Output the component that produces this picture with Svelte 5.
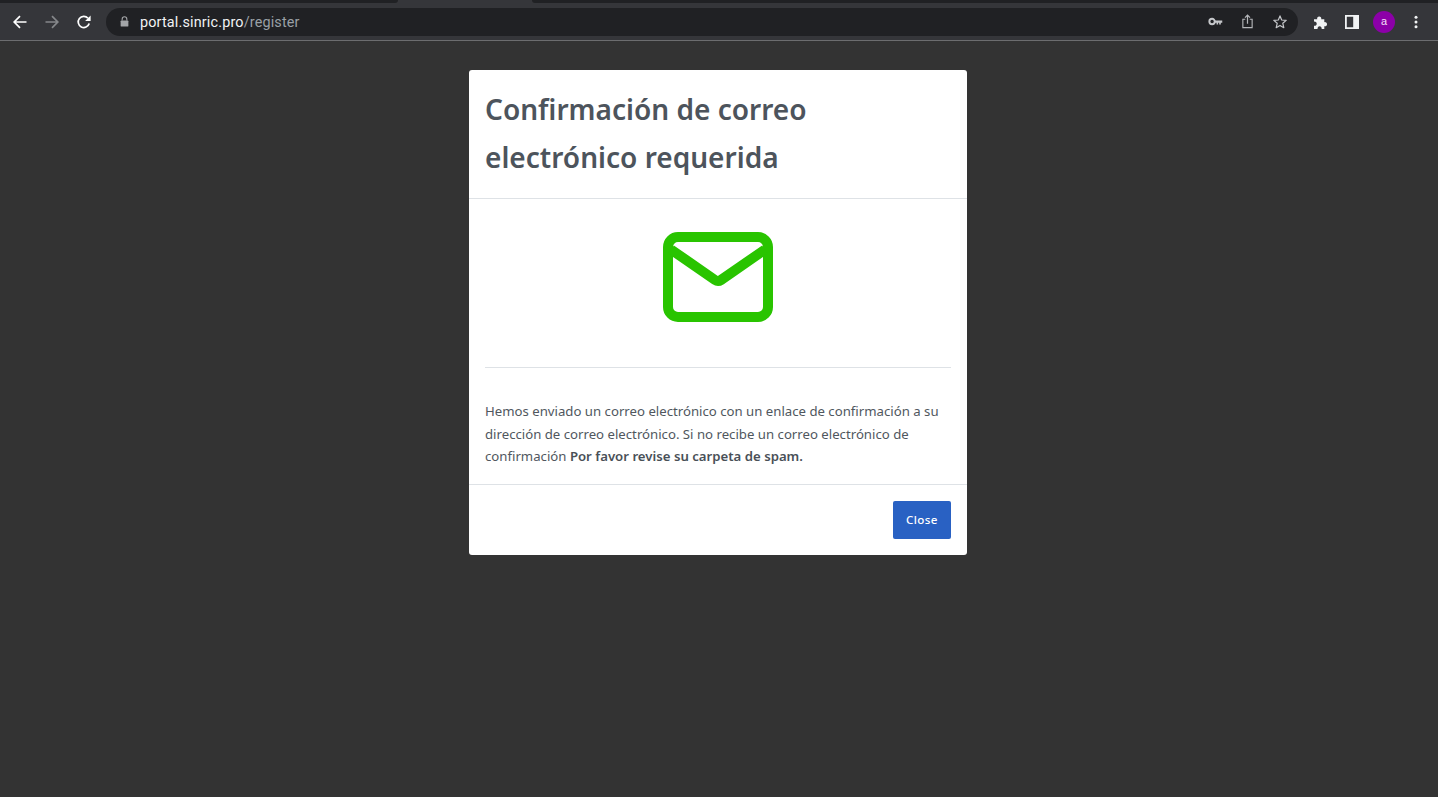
<script>
  const lines = ['Confirmación de correo', 'electrónico requerida'];
</script>

<div class="page">
  <header class="chrome">
    <div class="tabstrip">
      <div class="tab left"></div>
      <div class="gap"></div>
      <div class="tab right"></div>
    </div>
    <div class="toolbar">
      <svg class="nav" viewBox="0 0 16 16" width="16" height="16"><path d="M14.5 8H2.5M8 2.2 2.2 8 8 13.8" fill="none" stroke="#fff" stroke-width="1.7"/></svg>
      <svg class="nav fwd" viewBox="0 0 16 16" width="16" height="16"><path d="M1.5 8h12M8 2.2 13.8 8 8 13.8" fill="none" stroke="#85878a" stroke-width="1.7"/></svg>
      <svg class="nav reload" viewBox="0 0 16 16" width="16" height="16"><path d="M13.2 9.5A5.6 5.6 0 1 1 12 4.2" fill="none" stroke="#fff" stroke-width="1.7"/><path d="M14.6 1.6v5.5H9.1z" fill="#fff"/></svg>
      <div class="omnibox">
        <svg class="lock" viewBox="0 0 10 12" width="9" height="11"><path d="M2.4 5V3.4a2.6 2.6 0 0 1 5.2 0V5" fill="none" stroke="#a3a5a8" stroke-width="1.2"/><rect x="0.7" y="4.8" width="8.6" height="6.8" rx="1" fill="#a3a5a8"/></svg>
        <span class="url"><span class="host">portal.sinric.pro</span><span class="path">/register</span></span>
        <span class="spacer"></span>
        <svg class="omni-key" viewBox="0 0 16 10" width="15" height="9"><circle cx="4.2" cy="5" r="3" fill="none" stroke="#c5c7ca" stroke-width="2.2"/><path d="M7 3.8h8.5v2.6h-1.6v2h-1.8v-2h-1.2v2H9.2v-2H7z" fill="#c5c7ca"/></svg>
        <svg class="omni-share" viewBox="0 0 14 16" width="13" height="15"><path d="M4.6 5.6H2v9h10v-9H9.4" fill="none" stroke="#b5b7ba" stroke-width="1.2"/><path d="M7 10.5V1.5M4.3 3.9 7 1.2l2.7 2.7" fill="none" stroke="#b5b7ba" stroke-width="1.3"/></svg>
        <svg class="omni-star" viewBox="0 0 16 16" width="16" height="16"><path d="M8 1.9 9.7 6l4.5.4-3.4 2.9 1 4.4L8 11.4l-3.8 2.3 1-4.4-3.4-2.9L6.3 6z" fill="none" stroke="#c5c7ca" stroke-width="1.2" stroke-linejoin="round"/></svg>
      </div>
      <svg class="ext" viewBox="0 0 16 16" width="16" height="16"><path d="M1 5.2h3.2a2.1 2.1 0 1 1 4 0h3.1v3a2.1 2.1 0 1 1 0 4v2.9H8.6a2.1 2.1 0 1 0-4 0H1v-3.4a2.1 2.1 0 1 0 0-4z" fill="#f1f3f4"/></svg>
      <svg class="side" viewBox="0 0 14 14" width="14" height="14"><path d="M0 0h14v14H0z M1.8 1.8v10.4h6.4V1.8z" fill="#f1f3f4" fill-rule="evenodd"/></svg>
      <div class="avatar">a</div>
      <svg class="menu" viewBox="0 0 4 14" width="4" height="14"><circle cx="2" cy="2.2" r="1.5" fill="#f1f3f4"/><circle cx="2" cy="7" r="1.5" fill="#f1f3f4"/><circle cx="2" cy="11.8" r="1.5" fill="#f1f3f4"/></svg>
    </div>
  </header>

  <main class="stage">
    <section class="modal">
      <div class="modal-head">
        <h1>{#each lines as l}<span>{l}</span>{/each}</h1>
      </div>
      <div class="modal-body">
        <div class="icon-wrap">
          <svg viewBox="0 0 110 90" width="110" height="90">
            <rect x="5" y="5" width="100" height="80" rx="10" fill="none" stroke="#29c400" stroke-width="10"/>
            <path d="M8 17.5 52 48q3 2 6 0L102 17.5" fill="none" stroke="#29c400" stroke-width="10" stroke-linejoin="round"/>
          </svg>
        </div>
        <hr />
        <p>Hemos enviado un correo electrónico con un enlace de confirmación a su dirección de correo electrónico. Si no recibe un correo electrónico de confirmación <strong>Por favor revise su carpeta de spam.</strong></p>
      </div>
      <div class="modal-foot">
        <button type="button">Close</button>
      </div>
    </section>
  </main>
</div>

<style>
  :global(body) { margin: 0; background: #333; }
  .page { width: 1438px; height: 797px; overflow: hidden; background: #333; font-family: "Noto Sans", "Open Sans", sans-serif; display: flex; flex-direction: column; }
  .chrome { height: 40px; background: #35363a; border-bottom: 1px solid #6c6d6f; flex: none; }
  .tabstrip { height: 3px; display: flex; }
  .tab { background: #202124; }
  .tab.left { width: 398px; border-bottom-right-radius: 6px; }
  .gap { width: 134px; }
  .tab.right { flex: 1; border-bottom-left-radius: 6px; }
  .toolbar { height: 37px; display: flex; align-items: center; box-sizing: border-box; }
  .nav { margin-left: 12px; flex: none; }
  .nav.fwd { margin-left: 16px; }
  .nav.reload { margin-left: 16px; }
  .omnibox { margin-left: 14px; width: 1192px; height: 28px; background: #202124; border-radius: 14px; display: flex; align-items: center; box-sizing: border-box; padding-left: 14px; flex: none; }
  .url { margin-left: 11px; padding-top: 2px; font-family: "Roboto", "Liberation Sans", sans-serif; font-size: 14.4px; letter-spacing: 0.16px; white-space: nowrap; }
  .host { color: #f1f3f4; }
  .path { color: #9aa0a6; }
  .spacer { flex: 1; }
  .omni-key { margin-right: 18px; }
  .omni-share { margin-right: 18px; }
  .omni-star { margin-right: 10px; }
  .ext { margin-left: 15px; flex: none; }
  .side { margin-left: 16px; flex: none; }
  .avatar { margin-left: 14px; width: 22px; height: 22px; border-radius: 50%; background: #8c00a8; color: #f3e0f6; font: 11px/21px "Liberation Sans", Arial, sans-serif; text-align: center; flex: none; }
  .menu { margin-left: 19px; flex: none; }

  .stage { flex: 1; display: flex; justify-content: center; align-items: flex-start; padding: 29px 2px 0 0; }
  .modal { width: 498px; background: #fff; border-radius: 3px; color: #495057; }
  .modal-head { padding: 15px 16px 0; border-bottom: 1px solid #dee2e6; box-sizing: border-box; height: 129px; }
  h1 { margin: 0; font-size: 28.05px; font-weight: 600; line-height: 48px; color: #4d545c; }
  h1 span { display: block; }
  .modal-body { padding: 0 16px; height: 285px; box-sizing: border-box; }
  .icon-wrap { display: flex; justify-content: center; padding-top: 33px; box-sizing: border-box; height: 168px; }
  hr { border: 0; border-top: 1px solid #dee2e6; margin: 0; }
  p { margin: 32px 0 0; font-size: 13.2px; line-height: 22.5px; color: #50575e; }
  strong { font-weight: 600; color: #495057; }
  .modal-foot { border-top: 1px solid #dee2e6; height: 71px; box-sizing: border-box; display: flex; justify-content: flex-end; align-items: flex-start; padding: 16px; }
  button { width: 58px; height: 38px; padding: 0 0 2px; box-sizing: border-box; border: 0; border-radius: 2px; background: #2961c3; color: #fff; font: 500 11.6px "Noto Sans", sans-serif; letter-spacing: 0.4px; }
</style>
